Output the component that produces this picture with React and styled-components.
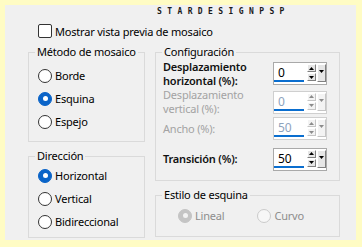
import React from 'react';
import styled, { createGlobalStyle } from 'styled-components';

const GlobalStyle = createGlobalStyle`
    html, body {
        margin: 0;
        padding: 0;
        background: #fffcc4;
        font-family: 'Noto Sans', 'Open Sans', sans-serif;
        font-size: 11px;
        letter-spacing: -0.2px;
        color: #000;
    }
    * {
        box-sizing: border-box;
    }
`;

const Page = styled.div`
    width: 362px;
    height: 247px;
    padding: 5px 6px 7px 5px;
`;

const Panel = styled.div`
    width: 351px;
    height: 235px;
    background: #f0f0f0;
    padding: 2px 16px 0 23px;
`;

const Watermark = styled.div`
    height: 10px;
    margin-left: 129px;
    font-family: 'DejaVu Sans Mono', monospace;
    font-size: 8px;
    font-weight: bold;
    line-height: 10px;
    letter-spacing: 5.4px;
    color: #1a1a1a;
`;

const CheckRow = styled.label`
    display: flex;
    align-items: center;
    gap: 3px;
    height: 16px;
    margin: 6px 0 0 10px;
`;

const CheckBox = styled.span`
    width: 14px;
    height: 14px;
    border: 1px solid #333;
    border-radius: 2px;
    background: #fff;
`;

const Columns = styled.div`
    display: grid;
    grid-template-columns: 117px 185px;
    column-gap: 10px;
    margin-top: 5px;
`;

const Column = styled.div`
    display: flex;
    flex-direction: column;
    gap: ${p => p.gap}px;
`;

const Group = styled.fieldset`
    margin: 0;
    min-width: 0;
    padding: 0;
    height: ${p => p.h}px;
    border: 1px solid #dadada;
    legend {
        margin-left: 6px;
        padding: 0 2px;
        line-height: 16px;
        white-space: nowrap;
    }
`;

const GroupBody = styled.div`
    padding-left: ${p => p.left}px;
    margin-top: ${p => p.top || 0}px;
`;

const RadioList = styled.div`
    display: flex;
    flex-direction: column;
`;

const RadioRow = styled.label`
    display: flex;
    align-items: center;
    gap: 3px;
    height: 23px;
    color: ${p => (p.disabled ? '#8d8d8d' : '#000')};
`;

const RadioDot = styled.span`
    position: relative;
    width: 14px;
    height: 14px;
    border-radius: 50%;
    flex: none;
    border: 1px solid ${p => (p.disabled ? (p.checked ? '#c4c4c4' : '#cbcbcb') : p.checked ? '#0a64c8' : '#333')};
    background: ${p => (p.disabled ? (p.checked ? '#c4c4c4' : '#f7f7f7') : p.checked ? '#0a64c8' : '#fff')};
    &::after {
        content: '';
        display: ${p => (p.checked ? 'block' : 'none')};
        position: absolute;
        left: 3.5px;
        top: 3.5px;
        width: 5px;
        height: 5px;
        border-radius: 50%;
        background: ${p => (p.disabled ? '#f2f2f2' : '#fff')};
    }
`;

const HorizRadios = styled.div`
    display: flex;
    gap: 33px;
    margin-top: 1px;
`;

const ConfigRow = styled.div`
    display: flex;
    align-items: center;
    justify-content: space-between;
    height: ${p => p.h}px;
    margin-top: ${p => p.mt || 0}px;
    padding-right: 12px;
`;

const Label = styled.span`
    line-height: 14px;
    font-weight: ${p => (p.disabled ? 400 : 600)};
    color: ${p => (p.disabled ? '#a3a3a3' : '#111')};
`;

const Spin = styled.div`
    display: flex;
    flex: none;
    width: 54px;
    height: 23px;
    border: 1px solid ${p => (p.disabled ? '#cfcfcf' : '#a9a9a9')};
    background: #fff;
`;

const SpinInput = styled.div`
    position: relative;
    width: 32px;
    padding: 3px 0 0 4px;
    line-height: 14px;
    font-size: 12px;
    color: ${p => (p.disabled ? '#8ea3bd' : '#000')};
    &::after {
        content: '';
        position: absolute;
        left: 0;
        right: 2px;
        bottom: 2px;
        height: 2px;
        background: #0a6ecf;
    }
`;

const Arrows = styled.div`
    display: flex;
    flex-direction: column;
    gap: 1px;
    margin: 1px 0 0 1px;
    opacity: ${p => (p.disabled ? 0.45 : 1)};
`;

const ArrowBtn = styled.div`
    display: flex;
    align-items: center;
    justify-content: center;
    width: 9px;
    height: 8px;
    background: #e6e6e6;
    border: 1px solid;
    border-color: #fff #808080 #808080 #fff;
`;

const DropBtn = styled.div`
    display: flex;
    justify-content: center;
    padding-top: 5px;
    width: 9px;
    height: 18px;
    margin: 1px 0 0 1px;
    background: #e6e6e6;
    border: 1px solid;
    border-color: #fff #808080 #808080 #fff;
    opacity: ${p => (p.disabled ? 0.45 : 1)};
`;

const Tri = ({ down }) => (
    <svg width="5" height="3" viewBox="0 0 5 3">
        <polygon points={down ? '0,0 5,0 2.5,3' : '0,3 5,3 2.5,0'} fill="#000" />
    </svg>
);

const Spinner = ({ value, disabled }) => (
    <Spin disabled={disabled}>
        <SpinInput disabled={disabled}>{value}</SpinInput>
        <Arrows disabled={disabled}>
            <ArrowBtn>
                <Tri />
            </ArrowBtn>
            <ArrowBtn>
                <Tri down />
            </ArrowBtn>
        </Arrows>
        <DropBtn disabled={disabled}>
            <Tri down />
        </DropBtn>
    </Spin>
);

const Radio = ({ label, checked, disabled }) => (
    <RadioRow disabled={disabled}>
        <RadioDot checked={checked} disabled={disabled} />
        {label}
    </RadioRow>
);

const App = () => {
    return (
        <Page>
            <GlobalStyle />
            <Panel>
                <Watermark>STARDESIGNPSP</Watermark>
                <CheckRow>
                    <CheckBox />
                    Mostrar vista previa de mosaico
                </CheckRow>
                <Columns>
                    <Column gap={6}>
                        <Group h={98}>
                            <legend>Método de mosaico</legend>
                            <GroupBody left={9} top={4}>
                                <RadioList>
                                    <Radio label="Borde" />
                                    <Radio label="Esquina" checked />
                                    <Radio label="Espejo" />
                                </RadioList>
                            </GroupBody>
                        </Group>
                        <Group h={90}>
                            <legend>Dirección</legend>
                            <GroupBody left={9}>
                                <RadioList>
                                    <Radio label="Horizontal" checked />
                                    <Radio label="Vertical" />
                                    <Radio label="Bidireccional" />
                                </RadioList>
                            </GroupBody>
                        </Group>
                    </Column>
                    <Column gap={6}>
                        <Group h={137}>
                            <legend>Configuración</legend>
                            <GroupBody left={7} top={-1}>
                                <ConfigRow h={29}>
                                    <Label>
                                        Desplazamiento
                                        <br />
                                        horizontal (%):
                                    </Label>
                                    <Spinner value="0" />
                                </ConfigRow>
                                <ConfigRow h={28}>
                                    <Label disabled>
                                        Desplazamiento
                                        <br />
                                        vertical (%):
                                    </Label>
                                    <Spinner value="0" disabled />
                                </ConfigRow>
                                <ConfigRow h={25}>
                                    <Label disabled>Ancho (%):</Label>
                                    <Spinner value="50" disabled />
                                </ConfigRow>
                                <ConfigRow h={24} mt={6}>
                                    <Label>Transición (%):</Label>
                                    <Spinner value="50" />
                                </ConfigRow>
                            </GroupBody>
                        </Group>
                        <Group h={50}>
                            <legend>Estilo de esquina</legend>
                            <GroupBody left={22}>
                                <HorizRadios>
                                    <Radio label="Lineal" checked disabled />
                                    <Radio label="Curvo" disabled />
                                </HorizRadios>
                            </GroupBody>
                        </Group>
                    </Column>
                </Columns>
            </Panel>
        </Page>
    );
};

export default App;
